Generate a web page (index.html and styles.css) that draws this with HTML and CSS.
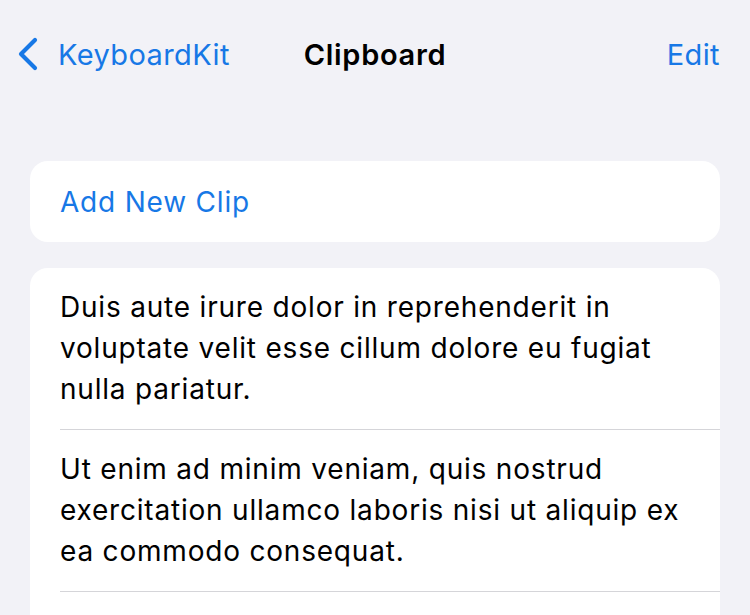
FILE: index.html
```html
<!DOCTYPE html>
<html>
<head>
<meta charset="utf-8">
<link rel="stylesheet" href="styles.css">
</head>
<body>
<div class="screen">
  <header class="navbar">
    <a class="nav-back">
      <svg class="chevron" width="22" height="34" viewBox="0 0 22 34"><path d="M18 3 L4 17 L18 31" fill="none" stroke="currentColor" stroke-width="4.2" stroke-linecap="round" stroke-linejoin="round"/></svg>
      <span>KeyboardKit</span>
    </a>
    <h1 class="nav-title">Clipboard</h1>
    <a class="nav-edit">Edit</a>
  </header>
  <section class="group group-add">
    <div class="cell cell-add">Add New Clip</div>
  </section>
  <section class="group group-clips">
    <div class="cell cell-text">Duis aute irure dolor in reprehenderit in voluptate velit esse cillum dolore eu fugiat nulla pariatur.</div>
    <div class="cell cell-text">Ut enim ad minim veniam, quis nostrud exercitation ullamco laboris nisi ut aliquip ex ea commodo consequat.</div>
  </section>
</div>
</body>
</html>
```
FILE: styles.css
```css
html, body {
  margin: 0;
  padding: 0;
}
body {
  background: #f2f2f7;
  font-family: Inter, "Noto Sans", sans-serif;
  color: #000;
  width: 750px;
  height: 615px;
  overflow: hidden;
}
.screen {
  padding: 0 30px;
}
.navbar {
  height: 110px;
  display: grid;
  grid-template-columns: 1fr auto 1fr;
  align-items: center;
  margin: 0 -30px;
  padding: 0 30px;
  box-sizing: border-box;
  position: relative;
  top: -1px;
}
.nav-back {
  display: flex;
  align-items: center;
  gap: 19px;
  margin-left: -13px;
  color: #1778e6;
  font-size: 29px;
  letter-spacing: 0.4px;
}
.chevron {
  display: block;
}
.nav-title {
  margin: 0;
  font-size: 29px;
  font-weight: 600;
  letter-spacing: 0.7px;
}
.nav-edit {
  justify-self: end;
  color: #1778e6;
  font-size: 29px;
  letter-spacing: 0.4px;
}
.group {
  background: #fff;
  border-radius: 18px;
  overflow: hidden;
  margin-top: 26px;
}
.group-add {
  margin-top: 51px;
}
.group-clips {
  padding-bottom: 60px;
}
.cell {
  padding: 0 30px;
  font-size: 28px;
  letter-spacing: 0.8px;
}
.cell-add {
  height: 81px;
  display: flex;
  align-items: center;
  color: #1778e6;
}
.cell-text {
  padding-top: 19px;
  padding-bottom: 19px;
  line-height: 41px;
  margin-left: 30px;
  padding-left: 0;
  border-bottom: 1px solid #d5d5d9;
}
```
